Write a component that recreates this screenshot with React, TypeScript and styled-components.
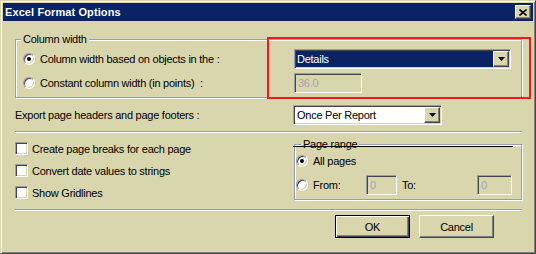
import React from "react";
import styled, { createGlobalStyle, css } from "styled-components";

const BG = "#d9d6ad";
const NAVY = "#0a2364";
const DARK = "#45444f";
const SHADOW = "#9c9bad";
const MID = "#808080";
const DISABLED_TEXT = "#a3a2b2";

const Global = createGlobalStyle`
  html, body { margin: 0; padding: 0; background: ${BG}; }
  body {
    font-family: "Liberation Sans", Arial, sans-serif;
    font-size: 11px;
    letter-spacing: -0.25px;
    color: #000;
  }
  * { box-sizing: border-box; }
`;

const raised = css`
  background: ${BG};
  border: 1px solid;
  border-color: #fff ${DARK} ${DARK} #fff;
  box-shadow: inset -1px -1px 0 ${MID}, inset 1px 1px 0 ${BG};
`;

const sunken = css`
  border: 1px solid;
  border-color: ${SHADOW} #fff #fff ${SHADOW};
  box-shadow: inset 1px 1px 0 ${DARK}, inset -1px -1px 0 ${BG};
`;

const Window = styled.div`
  position: relative;
  width: 536px;
  height: 254px;
  background: ${BG};
  border: 1px solid;
  border-color: ${BG} ${DARK} ${DARK} ${BG};
  box-shadow: inset 1px 1px 0 #fff, inset -1px -1px 0 ${MID};
  padding: 2px;
  display: flex;
  flex-direction: column;
`;

const TitleBar = styled.div`
  height: 18px;
  flex: none;
  background: ${NAVY};
  display: flex;
  align-items: center;
  justify-content: space-between;
  padding: 0 2px;
`;

const Title = styled.span`
  color: #fff;
  font-weight: bold;
  font-size: 11px;
  letter-spacing: 0.1px;
`;

const CloseButton = styled.div`
  ${raised};
  width: 16px;
  height: 14px;
  display: flex;
  align-items: center;
  justify-content: center;
`;

const Body = styled.div`
  flex: 1;
  display: flex;
  flex-direction: column;
  padding: 12px 11px 0 12px;
`;

const Group = styled.fieldset`
  margin: 0;
  padding: 0;
  min-width: 0;
  border: 1px solid ${SHADOW};
  box-shadow: inset 1px 1px 0 #fff, 1px 1px 0 #fff;
`;

const Legend = styled.legend<{ $offset: number }>`
  margin-left: ${(p) => p.$offset}px;
  padding: 0 2px;
  height: 13px;
  line-height: 13px;
  background: ${BG};
`;

const ColumnGrid = styled.div`
  display: grid;
  grid-template-columns: 271px 217px;
  grid-auto-rows: 20px;
  row-gap: 4px;
  align-items: center;
  padding: 3px 0 4px 7px;
`;

const OptionRow = styled.div`
  display: flex;
  align-items: center;
  gap: 5px;
  height: 20px;
  white-space: nowrap;
`;

const Radio = styled.span<{ $checked?: boolean }>`
  flex: none;
  width: 12px;
  height: 12px;
  border-radius: 50%;
  background: #fff;
  border: 1px solid;
  border-color: ${SHADOW} #fff #fff ${SHADOW};
  box-shadow: inset 1px 1px 0 ${DARK}, inset -1px -1px 0 ${BG};
  display: flex;
  align-items: center;
  justify-content: center;
  &::after {
    content: "";
    width: 4px;
    height: 4px;
    border-radius: 50%;
    background: #000;
    display: ${(p) => (p.$checked ? "block" : "none")};
  }
`;

const Checkbox = styled.span`
  flex: none;
  width: 13px;
  height: 13px;
  background: #fff;
  ${sunken};
`;

const Combo = styled.div<{ $width: number }>`
  ${sunken};
  width: ${(p) => p.$width}px;
  height: 20px;
  padding: 1px;
  background: #fff;
  display: flex;
`;

const ComboField = styled.div<{ $selected?: boolean }>`
  flex: 1;
  display: flex;
  align-items: center;
  padding-left: ${(p) => (p.$selected ? 1 : 2)}px;
  background: ${(p) => (p.$selected ? NAVY : "#fff")};
  color: ${(p) => (p.$selected ? "#fff" : "#000")};
  white-space: nowrap;
`;

const ComboArrow = styled.div`
  ${raised};
  flex: none;
  width: 16px;
  height: 16px;
  display: flex;
  align-items: center;
  justify-content: center;
`;

const TextBox = styled.div<{ $width: number }>`
  ${sunken};
  width: ${(p) => p.$width}px;
  height: 20px;
  background: ${BG};
  color: ${DISABLED_TEXT};
  display: flex;
  align-items: center;
  padding-left: 3px;
`;

const ExportRow = styled.div`
  display: grid;
  grid-template-columns: 278px 149px;
  align-items: center;
  height: 20px;
  margin-top: 7px;
`;

const Separator = styled.div<{ $top: number }>`
  flex: none;
  height: 2px;
  margin-top: ${(p) => p.$top}px;
  border-top: 1px solid ${SHADOW};
  border-bottom: 1px solid #fff;
`;

const LowerArea = styled.div`
  display: flex;
  margin-top: 5px;
`;

const CheckList = styled.div`
  width: 279px;
  flex: none;
  display: flex;
  flex-direction: column;
  gap: 9px;
  padding-top: 4px;
`;

const CheckRow = styled.div`
  display: flex;
  align-items: center;
  gap: 4px;
  height: 13px;
  white-space: nowrap;
`;

const RangeGroup = styled(Group)`
  flex: 1;
`;

const RangeBody = styled.div`
  position: relative;
  display: grid;
  grid-template-rows: 20px 20px;
  row-gap: 4px;
  padding: 0 0 4px 1px;
`;

const StrayLine = styled.div`
  position: absolute;
  left: -2px;
  top: -5px;
  width: 220px;
  height: 1px;
  background: #000;
`;

const FromRow = styled.div`
  display: grid;
  grid-template-columns: 70px 31px 80px 35px;
  align-items: center;
`;

const ToLabel = styled.span`
  padding-left: 5px;
`;

const ButtonRow = styled.div`
  display: flex;
  justify-content: flex-end;
  gap: 9px;
  margin-top: 4px;
  padding-right: 28px;
`;

const Button = styled.button<{ $default?: boolean }>`
  width: 75px;
  height: 23px;
  padding: 0;
  font: inherit;
  letter-spacing: inherit;
  color: #000;
  background: ${BG};
  border: 1px solid;
  ${(p) =>
    p.$default
      ? css`
          border-color: #000;
          box-shadow: inset 1px 1px 0 #fff, inset -1px -1px 0 ${DARK},
            inset -2px -2px 0 ${MID};
        `
      : css`
          border-color: #fff ${DARK} ${DARK} #fff;
          box-shadow: inset -1px -1px 0 ${MID}, inset 1px 1px 0 ${BG};
        `}
`;

const Highlight = styled.div`
  position: absolute;
  left: 266px;
  top: 36px;
  width: 264px;
  height: 62px;
  border: 2px solid #ee1c1c;
  pointer-events: none;
`;

const ArrowIcon = () => (
  <svg width="7" height="4" viewBox="0 0 7 4">
    <path d="M0 0h7L3.5 4z" fill="#000" />
  </svg>
);

const CloseIcon = () => (
  <svg width="8" height="7" viewBox="0 0 8 7">
    <path d="M0.5 0.5l7 6M7.5 0.5l-7 6" stroke="#000" strokeWidth="1.6" />
  </svg>
);

export default function App() {
  return (
    <>
      <Global />
      <Window>
        <TitleBar>
          <Title>Excel Format Options</Title>
          <CloseButton>
            <CloseIcon />
          </CloseButton>
        </TitleBar>
        <Body>
          <Group>
            <Legend $offset={5}>Column width</Legend>
            <ColumnGrid>
              <OptionRow>
                <Radio $checked />
                <span>Column width based on objects in the :</span>
              </OptionRow>
              <Combo $width={217}>
                <ComboField $selected>Details</ComboField>
                <ComboArrow>
                  <ArrowIcon />
                </ComboArrow>
              </Combo>
              <OptionRow>
                <Radio />
                <span>Constant column width (in points)&nbsp; :</span>
              </OptionRow>
              <TextBox $width={68}>36.0</TextBox>
            </ColumnGrid>
          </Group>

          <ExportRow>
            <span>Export page headers and page footers :</span>
            <Combo $width={149}>
              <ComboField>Once Per Report</ComboField>
              <ComboArrow>
                <ArrowIcon />
              </ComboArrow>
            </Combo>
          </ExportRow>

          <Separator $top={6} />

          <LowerArea>
            <CheckList>
              <CheckRow>
                <Checkbox />
                <span>Create page breaks for each page</span>
              </CheckRow>
              <CheckRow>
                <Checkbox />
                <span>Convert date values to strings</span>
              </CheckRow>
              <CheckRow>
                <Checkbox />
                <span>Show Gridlines</span>
              </CheckRow>
            </CheckList>
            <RangeGroup>
              <Legend $offset={6}>Page range</Legend>
              <RangeBody>
                <StrayLine />
                <OptionRow>
                  <Radio $checked />
                  <span>All pages</span>
                </OptionRow>
                <FromRow>
                  <OptionRow>
                    <Radio />
                    <span>From:</span>
                  </OptionRow>
                  <TextBox $width={31}>0</TextBox>
                  <ToLabel>To:</ToLabel>
                  <TextBox $width={35}>0</TextBox>
                </FromRow>
              </RangeBody>
            </RangeGroup>
          </LowerArea>

          <Separator $top={9} />

          <ButtonRow>
            <Button $default>OK</Button>
            <Button>Cancel</Button>
          </ButtonRow>
        </Body>
        <Highlight />
      </Window>
    </>
  );
}
